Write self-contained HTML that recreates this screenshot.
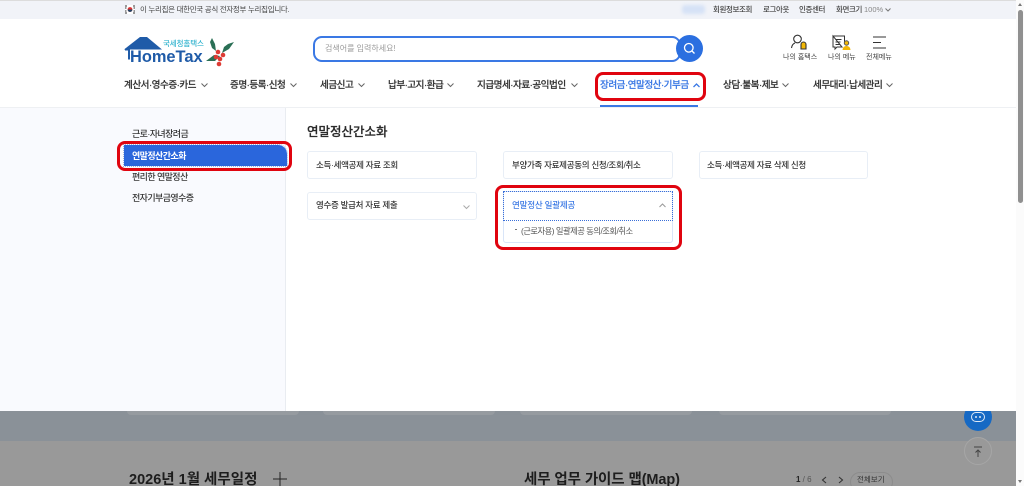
<!DOCTYPE html>
<html lang="ko"><head><meta charset="utf-8"><title>HomeTax</title>
<style>
*{box-sizing:border-box;margin:0;padding:0}
html,body{width:1024px;height:486px;overflow:hidden;background:#fff}
body{position:relative;font-family:"Liberation Sans","Noto Sans CJK KR",sans-serif;color:#333}
.a{position:absolute}
.t{position:absolute;white-space:nowrap;line-height:14px}
.nav{font-size:9.600px;font-weight:500;color:#333;top:79px;letter-spacing:-.5px;-webkit-text-stroke:.15px currentColor}
.box{position:absolute;background:#fff;border:1px solid #e8eef6;border-radius:3px}
.red{position:absolute;border:3px solid #e0040f;border-radius:8px}
.side{font-size:9px;font-weight:500;left:132px;color:#333;letter-spacing:-.6px}
.card{font-size:8.500px;font-weight:500;color:#333;letter-spacing:-.3px}
.top{font-size:7.500px;top:3px;color:#444;letter-spacing:-.4px}
svg{position:absolute;overflow:visible}
</style></head><body>

<!-- top strip -->
<div class="a" style="left:0;top:0;width:1016px;height:19px;background:#f1f3f8;border-top:1px solid #dcdcdc"></div>
<svg style="left:125px;top:5px" width="10" height="9" viewBox="0 0 10 9"><rect width="10" height="9" fill="#fff"/><circle cx="5" cy="4.500" r="2.400" fill="#d33"/><path d="M2.600 4.500a2.400 2.400 0 0 0 4.800 0z" fill="#246"/><path d="M0 1h2M0 3h1.500M8 1h2M8.500 3H10M0 6h1.500M0 8h2M8.500 6H10M8 8h2" stroke="#333"/></svg>
<div class="t top" style="left:140px;letter-spacing:-.3px">이 누리집은 대한민국 공식 전자정부 누리집입니다.</div>
<div class="a" style="left:682px;top:5px;width:23px;height:9px;background:#d6e2f6;border-radius:3px;filter:blur(1.500px)"></div>
<div class="t top" style="left:713px;font-weight:500">회원정보조회</div>
<div class="t top" style="left:763px;font-weight:500">로그아웃</div>
<div class="t top" style="left:799px;font-weight:500">인증센터</div>
<div class="t top" style="left:836px;font-weight:500">화면크기</div>
<div class="t top" style="left:864px;color:#888;letter-spacing:0">100%</div>
<svg style="left:885px;top:8px" width="6" height="4" fill="none" stroke="#777"><path d="M.5.500 3 3 5.500.5"/></svg>

<!-- logo -->
<svg style="left:124px;top:36px" width="112" height="32" viewBox="0 0 112 32">
<path d="M0 13.500 16 1h7l15 12.500z" fill="#1f5ba8"/>
<path d="M1 13.500h4v10" fill="none" stroke="#1f5ba8" stroke-width="2"/>
<path d="M88 2l3 6 1 7-4-3-2-6zM110 6l-5 7-7 4 2-6 4-3zM82 25l8-6 6 1-5 5z" fill="#2a6f55"/>
<circle cx="94" cy="16" r="2.300" fill="#dd3b34"/><circle cx="99" cy="19" r="2.300" fill="#dd3b34"/><circle cx="92" cy="21" r="2.300" fill="#dd3b34"/><circle cx="96" cy="23" r="2.300" fill="#dd3b34"/><circle cx="95" cy="28" r="2.300" fill="#dd3b34"/>
</svg>
<div class="t" style="left:163px;top:37px;font-size:7.500px;font-weight:500;color:#35b4cf;letter-spacing:-.1px">국세청홈택스</div>
<div class="t" style="left:130px;top:47px;font-size:16.400px;line-height:20px;font-weight:700;color:#1f5ba8">HomeTax</div>

<!-- search -->
<div class="a" style="left:313px;top:36px;width:368px;height:26px;border:2px solid #3a78e4;border-radius:9px;background:#fff"></div>
<div class="t" style="left:325px;top:42px;font-size:8px;color:#9a9a9a">검색어를 입력하세요!</div>
<div class="a" style="left:676px;top:35px;width:27px;height:27px;border-radius:50%;background:#2b6fe0"></div>
<svg style="left:683px;top:42px" width="13" height="13" fill="none" stroke="#fff" stroke-width="1.300"><circle cx="5.800" cy="5.800" r="4.300"/><path d="M9 9l2.500 2.500"/></svg>

<!-- header icons -->
<svg style="left:790px;top:34px" width="20" height="17" fill="none" stroke="#333" stroke-width="1.100"><circle cx="7.500" cy="5" r="3.800"/><path d="M1.500 14c.5-3 2-4.500 3.500-5"/><path d="M11 15v-4.500a2.500 2.500 0 0 1 5 0V15z" fill="#f2b705" stroke="#333"/></svg>
<svg style="left:832px;top:35px" width="20" height="16" fill="none" stroke="#333" stroke-width="1"><path d="M1 1h11.500v6M10 12H5l-2 2v-2H1V1z"/><path d="M3.500 4.500h6M3.500 7h5M3.500 9.500h4"/><circle cx="14.500" cy="8" r="2.200" fill="#f2b705" stroke="#555"/><path d="M10.500 15c.3-3 2-4 4-4s3.700 1 4 4z" fill="#f2b705" stroke="none"/></svg>
<svg style="left:872px;top:36px" width="15" height="13" stroke="#333" stroke-width="1.100"><path d="M1 1h13M1 6.500h8M1 12h13"/></svg>
<div class="t" style="left:783px;top:51px;font-size:7px;color:#444">나의 홈택스</div>
<div class="t" style="left:828px;top:51px;font-size:7px;color:#444">나의 메뉴</div>
<div class="t" style="left:866px;top:51px;font-size:7px;color:#444">전체메뉴</div>

<!-- nav -->
<div class="t nav" style="left:124px">계산서·영수증·카드</div>
<svg style="left:201px;top:83px" width="7" height="5" fill="none" stroke="#666"><path d="M.5.500 3.500 3.500 6.500.5"/></svg>
<div class="t nav" style="left:230px">증명·등록·신청</div>
<svg style="left:290px;top:83px" width="7" height="5" fill="none" stroke="#666"><path d="M.5.500 3.500 3.500 6.500.5"/></svg>
<div class="t nav" style="left:320px">세금신고</div>
<svg style="left:358px;top:83px" width="7" height="5" fill="none" stroke="#666"><path d="M.5.500 3.500 3.500 6.500.5"/></svg>
<div class="t nav" style="left:388px">납부·고지·환급</div>
<svg style="left:447px;top:83px" width="7" height="5" fill="none" stroke="#666"><path d="M.5.500 3.500 3.500 6.500.5"/></svg>
<div class="t nav" style="left:477px">지급명세·자료·공익법인</div>
<svg style="left:571px;top:83px" width="7" height="5" fill="none" stroke="#666"><path d="M.5.500 3.500 3.500 6.500.5"/></svg>
<div class="t nav" style="left:600px;color:#3a78e4">장려금·연말정산·기부금</div>
<svg style="left:693px;top:83px" width="7" height="5" fill="none" stroke="#3a78e4" stroke-width="1.300"><path d="M.5 4 3.500 1 6.500 4"/></svg>
<div class="a" style="left:600px;top:105px;width:98px;height:2px;background:#3a78e4;z-index:3"></div>
<div class="red" style="left:595px;top:72px;width:111px;height:29px"></div>
<div class="t nav" style="left:723px">상담·불복·제보</div>
<svg style="left:782px;top:83px" width="7" height="5" fill="none" stroke="#666"><path d="M.5.500 3.500 3.500 6.500.5"/></svg>
<div class="t nav" style="left:813px">세무대리·납세관리</div>
<svg style="left:886px;top:83px" width="7" height="5" fill="none" stroke="#666"><path d="M.5.500 3.500 3.500 6.500.5"/></svg>

<!-- panel -->
<div class="a" style="left:0;top:107px;width:1016px;height:1px;background:#eef0f3"></div>
<div class="a" style="left:0;top:108px;width:286px;height:303px;background:#f9fafe;border-right:1px solid #e9ecf1"></div>

<!-- sidebar -->
<div class="t side" style="top:127px">근로·자녀장려금</div>
<div class="a" style="left:124px;top:145px;width:163px;height:21px;background:#2a66dc;border-radius:0 9px 0 0;outline:1px dotted #9fb4dc"></div>
<div class="t side" style="top:149px;color:#fff;font-weight:700">연말정산간소화</div>
<div class="red" style="left:117px;top:141px;width:175px;height:30px"></div>
<div class="t side" style="top:170px">편리한 연말정산</div>
<div class="t side" style="top:191px">전자기부금영수증</div>

<!-- content -->
<div class="t" style="left:307px;top:125px;font-size:12.500px;font-weight:500;color:#2a2a2a;-webkit-text-stroke:.2px #2a2a2a">연말정산간소화</div>

<div class="box" style="left:307px;top:151px;width:170px;height:28px"></div>
<div class="t card" style="left:316px;top:158px">소득·세액공제 자료 조회</div>
<div class="box" style="left:503px;top:151px;width:170px;height:28px"></div>
<div class="t card" style="left:512px;top:158px">부양가족 자료제공동의 신청/조회/취소</div>
<div class="box" style="left:699px;top:151px;width:169px;height:28px"></div>
<div class="t card" style="left:707px;top:158px">소득·세액공제 자료 삭제 신청</div>

<div class="box" style="left:307px;top:192px;width:170px;height:28px"></div>
<div class="t card" style="left:316px;top:198px">영수증 발급처 자료 제출</div>
<svg style="left:463px;top:205px" width="7" height="5" fill="none" stroke="#aaa"><path d="M.5.500 3.500 3.500 6.500.5"/></svg>

<div class="box" style="left:503px;top:191px;width:170px;height:52px;border-color:#d9e5f8"></div>
<div class="a" style="left:503px;top:191px;width:170px;height:30px;border:1px dotted #3a6fd8"></div>
<div class="t card" style="left:512px;top:198px;color:#3a78e4;letter-spacing:-.2px">연말정산 일괄제공</div>
<svg style="left:659px;top:203px" width="7" height="5" fill="none" stroke="#999"><path d="M.5 4 3.500 1 6.500 4"/></svg>
<div class="a" style="left:515px;top:229px;width:2px;height:1px;background:#777"></div>
<div class="t" style="left:521px;top:224px;font-size:8.300px;color:#555;letter-spacing:-.5px">(근로자용) 일괄제공 동의/조회/취소</div>
<div class="red" style="left:495px;top:185px;width:187px;height:65px"></div>

<!-- dimmed page -->
<div class="a" style="left:0;top:411px;width:1016px;height:30px;background:#8a9198"></div>
<div class="a" style="left:0;top:441px;width:1016px;height:45px;background:#999"></div>
<div class="a" style="left:127px;top:411px;width:172px;height:4px;background:#969ba0;border-radius:0 0 5px 5px"></div>
<div class="a" style="left:323px;top:411px;width:172px;height:4px;background:#969ba0;border-radius:0 0 5px 5px"></div>
<div class="a" style="left:520px;top:411px;width:172px;height:4px;background:#969ba0;border-radius:0 0 5px 5px"></div>
<div class="a" style="left:719px;top:411px;width:172px;height:4px;background:#969ba0;border-radius:0 0 5px 5px"></div>

<div class="t" style="left:129px;top:471px;font-size:14.500px;line-height:18px;font-weight:700;color:#1d1d1d">2026년 1월 세무일정</div>
<svg style="left:273px;top:472px" width="14" height="14" stroke="#222" stroke-width="1"><path d="M0 7h14M7 0v14"/></svg>
<div class="t" style="left:524px;top:471px;font-size:14.500px;line-height:18px;font-weight:700;color:#1d1d1d;letter-spacing:-.1px">세무 업무 가이드 맵(Map)</div>
<div class="t" style="left:796px;top:473px;font-size:8px;color:#222;font-weight:700">1<span style="font-weight:400;color:#555"> / 6</span></div>
<svg style="left:821px;top:476px" width="6" height="8" fill="none" stroke="#333" stroke-width="1.100"><path d="M5 1 1.500 4 5 7"/></svg>
<svg style="left:838px;top:476px" width="6" height="8" fill="none" stroke="#333" stroke-width="1.100"><path d="M1 1 4.500 4 1 7"/></svg>
<div class="a" style="left:850px;top:472px;width:43px;height:20px;border:1px solid #8c8c8c;border-radius:10px"></div>
<div class="t" style="left:857px;top:473px;font-size:7.500px;color:#333">전체보기</div>

<!-- floating -->
<div class="a" style="left:964px;top:403px;width:28px;height:28px;border-radius:50%;background:#1669c4;clip-path:inset(8px 0 0 0)"></div>
<div class="a" style="left:971px;top:412px;width:14px;height:10px;border:1.500px solid #dfe9f5;border-radius:5px"></div>
<div class="a" style="left:975px;top:416px;width:2px;height:2px;background:#dfe9f5;border-radius:50%"></div>
<div class="a" style="left:979px;top:416px;width:2px;height:2px;background:#dfe9f5;border-radius:50%"></div>
<div class="a" style="left:964px;top:437px;width:28px;height:28px;border-radius:50%;background:#999;border:1px solid #a6a6a6"></div>
<svg style="left:973px;top:446px" width="10" height="12" fill="none" stroke="#444"><path d="M1 1h8M5 11V4M2.500 6.500 5 4l2.500 2.500"/></svg>

<!-- scrollbar -->
<div class="a" style="left:1016px;top:0;width:8px;height:486px;background:#fbfbfb"></div>
<div class="a" style="left:1018px;top:10px;width:5px;height:193px;background:#909090;border-radius:3px"></div>
<div class="a" style="left:1018px;top:3px;width:0;height:0;border-left:2.500px solid transparent;border-right:2.500px solid transparent;border-bottom:3px solid #777"></div>
<div class="a" style="left:1018px;top:480px;width:0;height:0;border-left:2.500px solid transparent;border-right:2.500px solid transparent;border-top:3px solid #777"></div>
</body></html>
